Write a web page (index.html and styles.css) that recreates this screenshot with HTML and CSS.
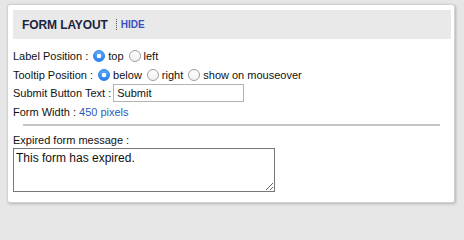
FILE: index.html
```html
<!DOCTYPE html>
<html>
<head>
<meta charset="utf-8">
<link rel="stylesheet" href="styles.css">
</head>
<body>
<div class="panel">
  <div class="header">
    <span class="title">FORM LAYOUT</span>
    <span class="sep"></span>
    <a class="hide">HIDE</a>
  </div>
  <div class="content">
    <div class="row">
      <span>Label Position :</span>
      <input class="radio" type="radio" name="lp" checked><span class="opt">top</span>
      <input class="radio" type="radio" name="lp"><span class="opt">left</span>
    </div>
    <div class="row">
      <span>Tooltip Position :</span>
      <input class="radio" type="radio" name="tp" checked><span class="opt">below</span>
      <input class="radio" type="radio" name="tp"><span class="opt">right</span>
      <input class="radio" type="radio" name="tp"><span class="opt">show on mouseover</span>
    </div>
    <div class="row row-input">
      <span>Submit Button Text :</span>
      <input class="text" type="text" value="Submit">
    </div>
    <div class="row">
      <span>Form Width :&nbsp;</span><span class="value">450 pixels</span>
    </div>
    <div class="rule"></div>
    <div class="label">Expired form message :</div>
    <textarea class="message">This form has expired.</textarea>
  </div>
</div>
</body>
</html>
```
FILE: styles.css
```css
html, body {
  margin: 0;
  padding: 0;
}
body {
  background: #e6e6e6;
  font-family: "Liberation Sans", Arial, Helvetica, sans-serif;
  width: 464px;
  height: 208px;
  overflow: hidden;
}
.panel {
  margin: 4px 0 0 7px;
  width: 448px;
  height: 199px;
  box-sizing: border-box;
  background: #fff;
  border: 1px solid #d2d2d2;
  border-radius: 3px;
  box-shadow: 1px 1px 3px rgba(0, 0, 0, 0.22);
  padding: 5px 3px 0 5px;
}
.header {
  height: 29px;
  background: #e9e9e9;
  display: flex;
  align-items: center;
  padding-left: 9px;
}
.title {
  font-size: 12px;
  font-weight: bold;
  color: #1c2540;
  letter-spacing: -0.1px;
}
.sep {
  width: 0;
  height: 11px;
  border-left: 1px dotted #555;
  margin-left: 8px;
}
.hide {
  margin-left: 4px;
  font-size: 10px;
  font-weight: bold;
  color: #3b4fc4;
  cursor: pointer;
}
.content {
  padding-top: 7px;
  font-size: 11px;
  color: #111;
}
.row {
  display: flex;
  align-items: center;
  height: 19px;
  white-space: nowrap;
}
.row-input {
  height: 18px;
}
.radio {
  -webkit-appearance: none;
  appearance: none;
  box-sizing: border-box;
  width: 12px;
  height: 12px;
  margin: 0 0 0 5px;
  border-radius: 50%;
  border: 1px solid #9e9e9e;
  background: linear-gradient(#ffffff, #f1f1f1);
}
.radio:checked {
  border-color: #2f7fe8;
  background: radial-gradient(circle, #ffffff 0 2px, rgba(255,255,255,0) 2.6px),
              linear-gradient(#5ba9fb, #2a80f0);
}
.opt {
  margin-left: 3px;
}
.text {
  box-sizing: border-box;
  width: 131px;
  height: 18px;
  margin: 0 0 0 2px;
  padding: 0 3px;
  border: 1px solid #b3b3b3;
  font-family: "Liberation Sans", Arial, Helvetica, sans-serif;
  font-size: 11px;
  color: #111;
  outline: none;
}
.value {
  color: #2b5bbf;
}
.rule {
  margin: 3px 0 0 10px;
  width: 417px;
  height: 2px;
  background: #c6c6c6;
}
.label {
  margin-top: 7px;
  line-height: 14px;
}
.message {
  display: block;
  box-sizing: border-box;
  width: 262px;
  height: 44px;
  margin: 1px 0 0 0;
  padding: 2px;
  border: 1px solid #777;
  font-family: "Liberation Sans", Arial, Helvetica, sans-serif;
  font-size: 12px;
  color: #111;
  outline: none;
}
```
